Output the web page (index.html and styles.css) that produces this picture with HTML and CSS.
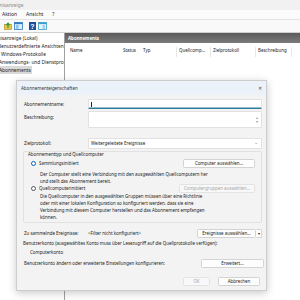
FILE: index.html
```html
<!DOCTYPE html>
<html lang="de">
<head>
<meta charset="utf-8">
<title>Ereignisanzeige</title>
<link rel="stylesheet" href="styles.css">
</head>
<body>
<div class="app">
  <div class="titlebar"><span class="title">Ereignisanzeige</span></div>
  <div class="menubar"><span>Aktion</span><span>Ansicht</span><span>?</span></div>
  <div class="toolbar">
    <svg class="tb-icon" width="8" height="8" viewBox="0 0 8 8"><rect x="0.5" y="2.5" width="7" height="5" fill="#e8c64a" stroke="#b08a1e" stroke-width="0.6"/><path d="M4 6 V1.5 M2.2 3.2 L4 1.2 L5.8 3.2" stroke="#2e9a3a" stroke-width="1.2" fill="none"/></svg>
    <svg class="tb-icon" width="9" height="8" viewBox="0 0 9 8"><rect x="0.5" y="0.5" width="8" height="7" fill="#dbeefc" stroke="#2f7dc4" stroke-width="0.8"/><rect x="0.5" y="0.5" width="8" height="1.6" fill="#2f7dc4"/><rect x="2" y="2.8" width="2.5" height="4" fill="#8fc3ee"/></svg>
    <svg class="tb-icon gap" width="7" height="8" viewBox="0 0 7 8"><rect x="0" y="0" width="7" height="8" fill="#1d4f9e"/><text x="3.5" y="6.6" font-size="7" font-family="Liberation Sans, sans-serif" font-weight="bold" fill="#fff" text-anchor="middle">?</text></svg>
    <svg class="tb-icon" width="9" height="8" viewBox="0 0 9 8"><rect x="0.5" y="0.5" width="8" height="7" fill="#e9f5fb" stroke="#3b9cc8" stroke-width="0.8"/><rect x="0.5" y="0.5" width="8" height="1.6" fill="#3b9cc8"/><rect x="4.5" y="2.8" width="2.5" height="4" fill="#9fd3ea"/></svg>
  </div>
  <div class="main">
    <div class="tree">
      <div class="tree-item root">Ereignisanzeige (Lokal)</div>
      <div class="tree-item child">Benutzerdefinierte Ansichten</div>
      <div class="tree-item child2">Windows-Protokolle</div>
      <div class="tree-item child3">Anwendungs- und Dienstprotokolle</div>
      <div class="tree-item child4"><span class="selected">Abonnements</span></div>
    </div>
    <div class="pane">
      <div class="pane-head">Abonnements</div>
      <div class="cols">
        <div class="col c-name">Name</div>
        <div class="col c-status">Status</div>
        <div class="col c-typ">Typ</div>
        <div class="col c-src">Quellcomp...</div>
        <div class="col c-log">Zielprotokoll</div>
        <div class="col c-desc">Beschreibung</div>
        <div class="col c-rest"></div>
      </div>
    </div>
  </div>
</div>

<div class="dialog">
  <div class="dlg-title"><span>Abonnementeigenschaften</span><span class="close">✕</span></div>
  <div class="dlg-body">
    <div class="form-row row-name">
      <label class="lbl">Abonnementname:</label>
      <div class="input focused"><span class="caret"></span></div>
    </div>
    <div class="form-row row-desc">
      <label class="lbl top">Beschreibung:</label>
      <div class="input textarea"><span class="spin">▴</span><span class="spin">▾</span></div>
    </div>
    <div class="form-row row-log">
      <label class="lbl">Zielprotokoll:</label>
      <div class="input select"><span>Weitergeleitete Ereignisse</span><span class="chev">⌄</span></div>
    </div>

    <div class="group">
      <div class="group-title">Abonnementtyp und Quellcomputer</div>
      <div class="radio-row">
        <span class="radio checked"></span><span class="radio-label">Sammlungsinitiiert</span>
        <span class="btn btn-comp">Computer auswählen...</span>
      </div>
      <p class="desc d1">Der Computer stellt eine Verbindung mit den ausgewählten Quellcomputern her<br>und stellt das Abonnement bereit.</p>
      <div class="radio-row r2">
        <span class="radio"></span><span class="radio-label">Quellcomputerinitiiert</span>
        <span class="btn btn-group disabled">Computergruppen auswählen...</span>
      </div>
      <p class="desc d2">Die Quellcomputer in den ausgewählten Gruppen müssen über eine Richtlinie<br>oder mit einer lokalen Konfiguration so konfiguriert werden, dass sie eine<br>Verbindung mit diesem Computer herstellen und das Abonnement empfangen<br>können.</p>
    </div>

    <div class="form-row row-events">
      <label class="lbl">Zu sammelnde Ereignisse:</label>
      <div class="events-val">
        <span>&lt;Filter nicht konfiguriert&gt;</span>
        <span class="split"><span class="btn btn-ev">Ereignisse auswählen...</span><span class="btn btn-drop">▾</span></span>
      </div>
    </div>
    <div class="line acct">Benutzerkonto (ausgewähltes Konto muss über Lesezugriff auf die Quellprotokolle verfügen):</div>
    <div class="line acct-val">Computerkonto</div>
    <div class="adv-row">
      <span>Benutzerkonto ändern oder erweiterte Einstellungen konfigurieren:</span>
      <span class="btn btn-adv">Erweitert...</span>
    </div>
    <div class="footer">
      <span class="btn btn-ok disabled">OK</span>
      <span class="btn btn-cancel">Abbrechen</span>
    </div>
  </div>
</div>
</body>
</html>
```
FILE: styles.css
```css
* { box-sizing: border-box; }
html, body { margin: 0; padding: 0; }
body {
  width: 300px;
  height: 300px;
  overflow: hidden;
  position: relative;
  background: #fff;
  color: #1b1b1b;
  font-family: "Noto Sans", "Liberation Sans", sans-serif;
  font-size: 4.45px;
  line-height: 7px;
}
.app { display: flex; flex-direction: column; height: 300px; }
.titlebar {
  height: 10px; background: #f1f1f1; color: #8c8c8c;
  display: flex; align-items: center; overflow: hidden; white-space: nowrap;
}
.titlebar .title { margin-left: -12px; font-size: 4.8px; }
.menubar {
  height: 10px; background: #fbfbfb; display: flex; align-items: center;
  gap: 9px; padding-left: 2px; border-bottom: 1px solid #e4e4e4;
  font-size: 5px;
}
.toolbar {
  height: 13px; background: #f9f9f9; display: flex; align-items: center;
  gap: 2px; padding-left: 4px; border-bottom: 1px solid #cfcfcf;
}
.tb-icon { display: block; }
.tb-icon.gap { margin-left: 4px; }
.main { flex: 1; display: flex; min-height: 0; }
.tree {
  width: 65px; flex: none; border-right: 1px solid #a0a0a0;
  overflow: hidden; white-space: nowrap; padding-top: 1px;
  font-size: 4.8px;
}
.tree-item { height: 8px; line-height: 8px; }
.tree-item.root { margin-left: -14px; }
.tree-item.child { margin-left: -2px; }
.tree-item.child2 { margin-left: 1px; }
.tree-item.child3 { margin-left: -1px; }
.tree-item.child4 { margin-left: -2px; }
.selected { background: #d9d9d9; padding: 0 1px; display: inline-block; line-height: 8px; }
.pane { flex: 1; display: flex; flex-direction: column; }
.pane-head {
  height: 10px; line-height: 10px; padding-left: 3px;
  background: linear-gradient(#5b5b5b, #7b7b7b);
  color: #fff; font-weight: bold;
}
.cols {
  display: grid;
  grid-template-columns: 56px 20px 36px 34px 45px 36px 1fr;
  padding-top: 4px; height: 14px;
}
.col { padding-left: 2px; white-space: nowrap; overflow: hidden; }
.c-name { padding-left: 5px; }
.c-typ, .c-src, .c-log, .c-desc { border-right: 1px solid #e6e6e6; }

/* dialog */
.dialog {
  position: absolute; left: 16px; top: 80px; width: 251px; height: 211px;
  background: #f3f3f3; border: 1px solid #cdcdcd;
  box-shadow: 0 2px 8px rgba(0,0,0,0.22);
  display: flex; flex-direction: column;
}
.dlg-title {
  height: 14px; flex: none; background: #ebf2fa;
  display: flex; align-items: center; justify-content: space-between;
  padding: 0 4px 0 4px; color: #333;
}
.close { font-size: 5px; color: #444; }
.dlg-body { padding: 4px 4px 0 6px; display: flex; flex-direction: column; }
.form-row { display: grid; grid-template-columns: 65px 1fr; align-items: center; }
.lbl { padding-left: 1px; }
.lbl.top { align-self: start; padding-top: 3px; }
.input {
  background: #fff; border: 1px solid #e1e1e1; border-radius: 1px;
  display: flex; align-items: center; justify-content: space-between;
  padding: 0 3px 0 2px;
}
.row-name .input { height: 10px; }
.focused { border-bottom: 1px solid #2b7c9e; box-shadow: inset 0 -0.5px 0 #2b7c9e; }
.caret { width: 0.6px; height: 5px; background: #222; }
.row-desc { margin-top: 2px; }
.textarea { height: 17px; flex-direction: column; align-items: flex-end; justify-content: center; gap: 0; }
.spin { font-size: 3.5px; line-height: 3.5px; color: #999; }
.row-log { margin-top: 10px; }
.select { height: 11px; }
.chev { color: #888; font-size: 5px; line-height: 5px; margin-top: -2px; }

.group {
  margin-top: 2px; border: 1px solid #e1e1e1; border-radius: 2px;
  padding: 0 6px 2px 1px;
}
.group-title { padding-left: 3px; margin-top: -1px; }
.radio-row { display: flex; align-items: center; height: 10px; padding-left: 6px; }
.radio-row.r2 { margin-top: -1px; }
.radio {
  width: 5px; height: 5px; border-radius: 50%; border: 0.7px solid #555;
  background: #fff; flex: none;
}
.radio.checked { border: 1.4px solid #0063b8; background: #fff; }
.radio-label { margin-left: 3px; flex: 1; }
.desc { margin: 3px 0 0 15px; line-height: 6.7px; }
.desc.d2 { margin-top: 0; }
.btn {
  background: #fdfdfd; border: 1px solid #d3d3d3; border-radius: 1.5px;
  height: 9px; display: inline-flex; align-items: center; justify-content: center;
  color: #1b1b1b; white-space: nowrap;
}
.btn.disabled { color: #a6a6a6; background: #f8f8f8; border-color: #e3e3e3; }
.btn-comp { width: 72px; }
.btn-group { width: 76px; }
.row-events { margin-top: 6px; }
.events-val { display: flex; align-items: center; justify-content: space-between; }
.split { display: flex; }
.btn-ev { width: 59px; }
.btn-drop { width: 6px; font-size: 4px; border-left: none; }
.line { margin-top: 3px; }
.acct { margin-top: 2px; }
.acct-val { margin-top: 2px; padding-left: 7px; }
.adv-row { display: flex; align-items: center; justify-content: space-between; margin-top: 3px; padding-left: 1px; }
.btn-adv { width: 63px; margin-right: -2px; }
.footer { display: flex; justify-content: flex-end; gap: 8px; margin-top: 9px; padding-right: 2px; }
.btn-ok { width: 27px; }
.btn-cancel { width: 42px; }
```
